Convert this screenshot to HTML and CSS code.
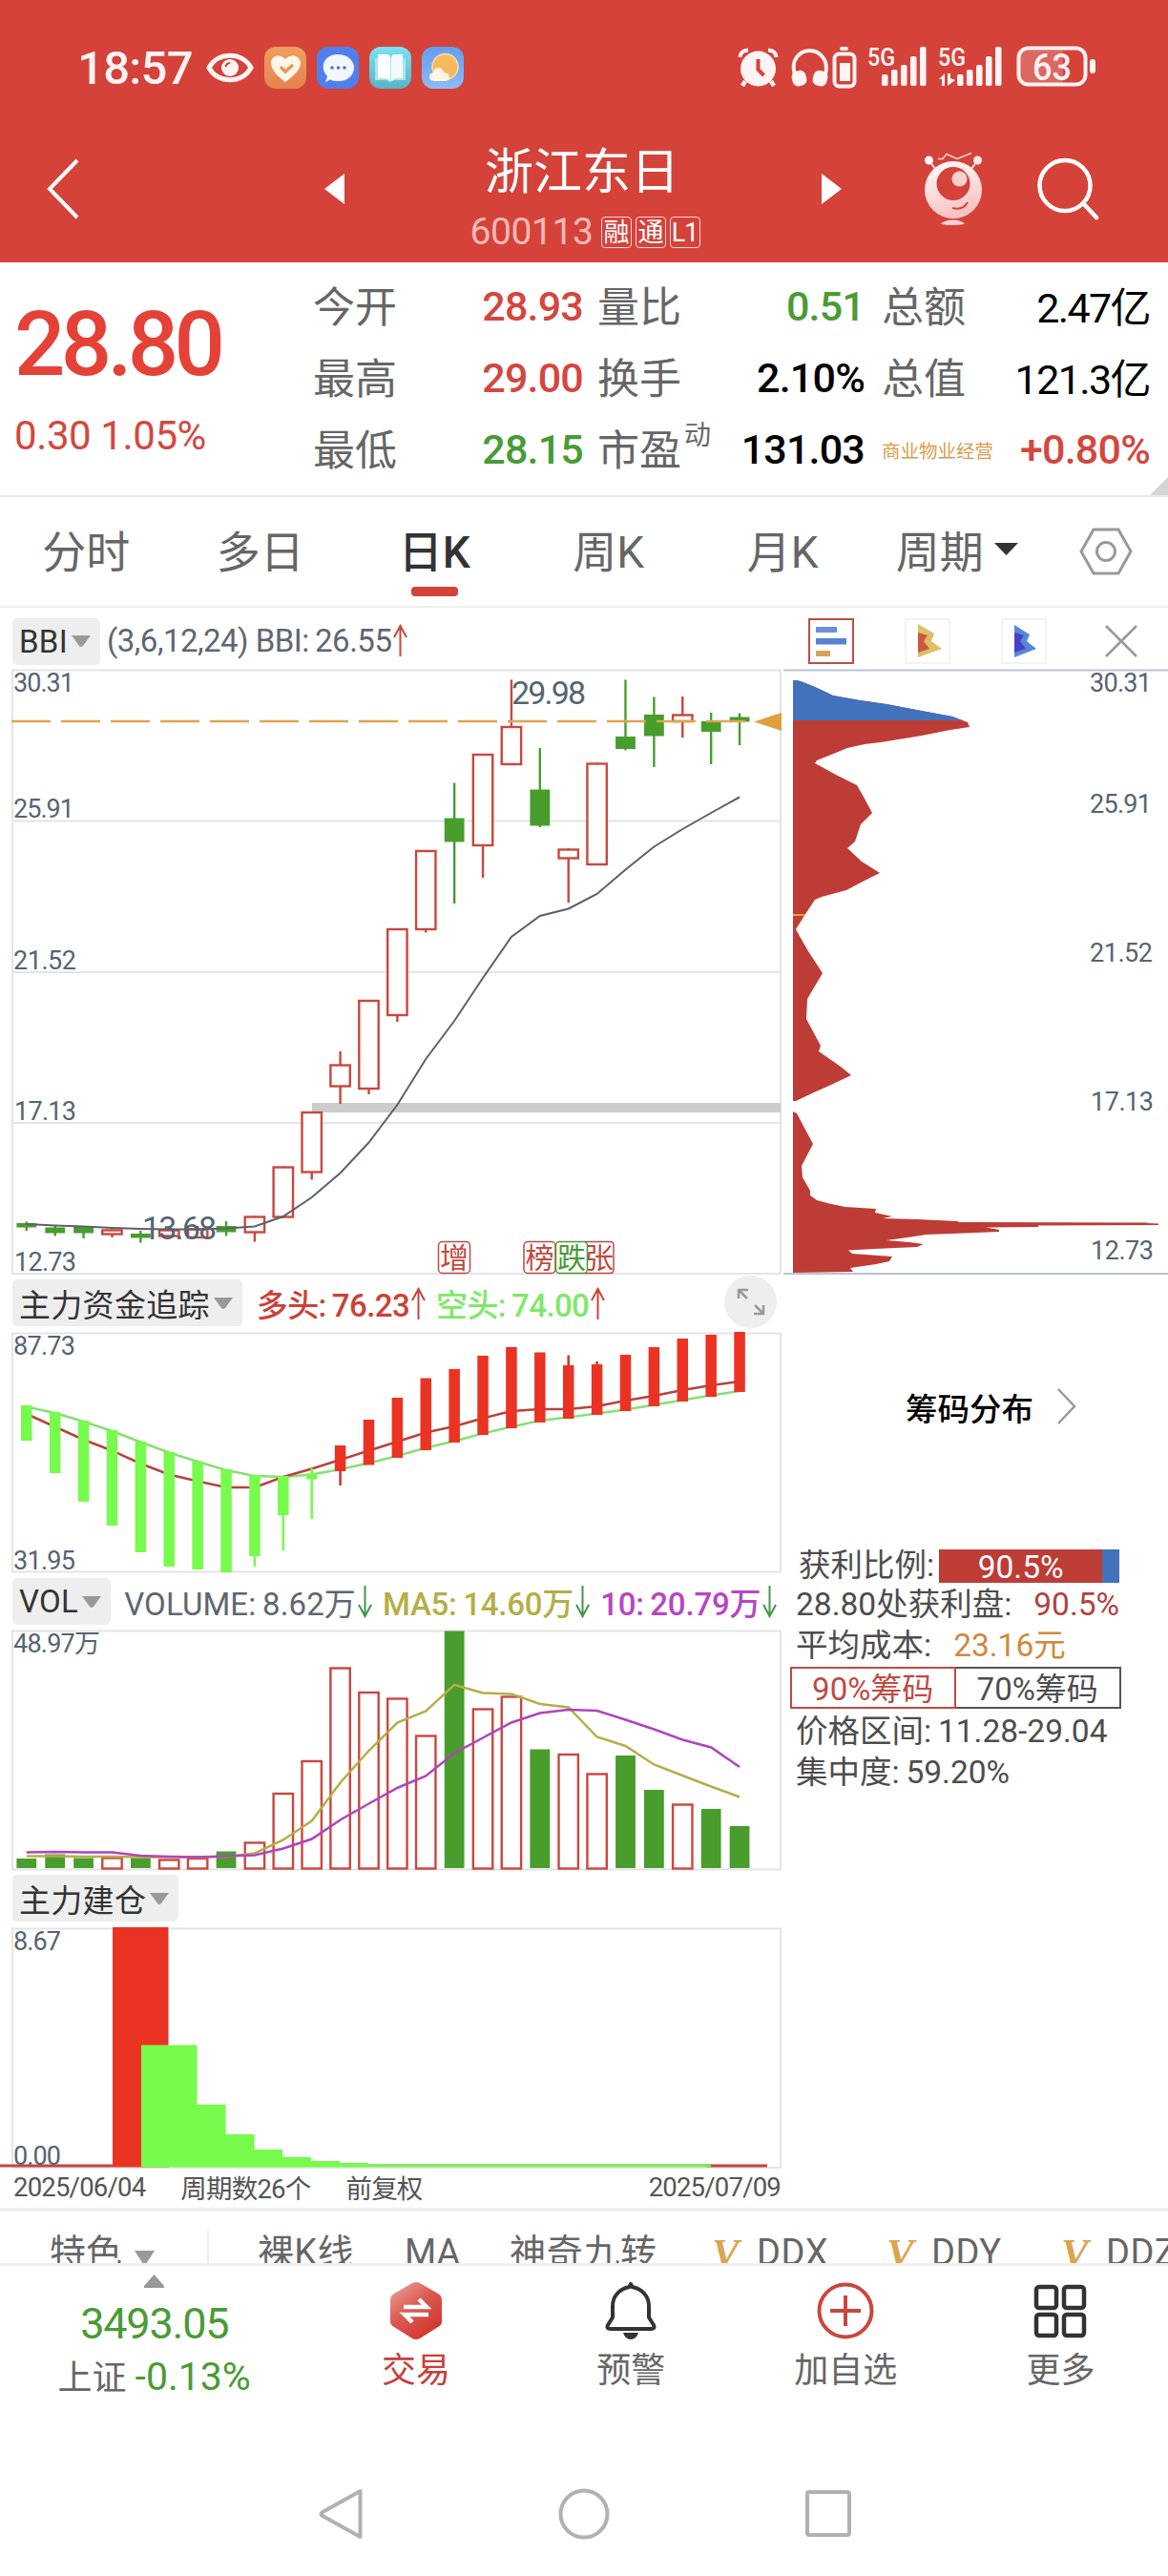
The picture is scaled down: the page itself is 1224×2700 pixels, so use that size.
FILE: index.html
```html
<html lang="zh-CN">
<head>
    <meta charset="utf-8">
    <title>浙江东日 600113</title>
    <link rel="stylesheet" href="styles.css">
    <script src="charts.js" defer></script>
</head>

<body>
<header>
    <div class="status">
        <span class="clock">18:57</span>
        <svg class="eye" width="50" height="34" viewBox="0 0 50 34">
            <path d="M3 17C12 0 38 0 47 17C38 34 12 34 3 17Z" fill="none" stroke="#fff3f3" stroke-width="5"/>
            <circle cx="25" cy="17" r="9" fill="#fff3f3"/>
            <path d="M20.500 16Q21 12.500 25 12" fill="none" stroke="#d4423a" stroke-width="2"/>
        </svg>
        <svg class="app" width="44" height="44" viewBox="0 0 44 44">
            <defs><linearGradient id="g1" x2="0" y2="1"><stop stop-color="#ef9f5e"/><stop offset="1" stop-color="#e58350"/></linearGradient></defs>
            <rect width="44" height="44" rx="12" fill="url(#g1)"/>
            <path d="M22 37C14 31 7 24 7 17C7 9 17 7 22 13C27 7 38 9 38 17C38 24 30 31 22 37Z" fill="#fff6e8"/>
            <path d="M17 21L22 26L30 19" fill="none" stroke="#e8975a" stroke-width="3.500"/>
        </svg>
        <svg class="app" width="44" height="44" viewBox="0 0 44 44">
            <rect width="44" height="44" rx="12" fill="#4f80ee"/>
            <path d="M9 37L11 31C2 21 8 8 22 8C33 8 39 15 39 22C39 30 32 36 23 36C19 36 16 35.500 14 34.500Z" fill="#f2f6ff"/>
            <circle cx="16" cy="22" r="1.800" fill="#4a72c8"/><circle cx="22.500" cy="22" r="1.800" fill="#4a72c8"/><circle cx="29" cy="22" r="1.800" fill="#4a72c8"/>
        </svg>
        <svg class="app" width="44" height="44" viewBox="0 0 44 44">
            <defs><linearGradient id="g2" x2="0" y2="1"><stop stop-color="#7be2f3"/><stop offset="1" stop-color="#58b4c8"/></linearGradient></defs>
            <rect width="44" height="44" rx="12" fill="url(#g2)"/>
            <path d="M6 12H38V35H26L22 37L18 35H6Z" fill="#a9e7ee"/>
            <path d="M9 8H18Q22 8 22 12V36Q20 33 17 33H9Z" fill="#fff"/>
            <path d="M35 8H27Q23 8 23 12V36Q25 33 28 33H35Z" fill="#f3fbfc"/>
        </svg>
        <svg class="app" width="44" height="44" viewBox="0 0 44 44">
            <defs><linearGradient id="g3" x2="0" y2="1"><stop stop-color="#639eef"/><stop offset="1" stop-color="#8dbbf6"/></linearGradient></defs>
            <rect width="44" height="44" rx="12" fill="url(#g3)"/>
            <circle cx="24.500" cy="21" r="13.500" fill="#f6b95e" stroke="#f9dda4" stroke-width="1.500"/>
            <path d="M13 36C6 36 7 27 12 27C13 20 22 21 23 27C30 27 31 36 25 36Z" fill="#fff4e6"/>
        </svg>
        <svg class="sys" width="380" height="48" viewBox="770 48 380 48">
            <g fill="none" stroke="#fff3f3">
                <path d="M774.500 61Q775 54 783 53.500M812.500 61Q812 54 804 53.500" stroke-width="4"/>
                <path d="M780 86L777 91M807 86L810 91" stroke-width="4.500"/>
                <path d="M832 79C827 64 837 54 847.500 54S868 64 864 79" stroke-width="4"/>
                <rect x="873.500" y="57.500" width="21" height="34" rx="5" stroke-width="4"/>
                <rect x="1066.500" y="51.500" width="70" height="38" rx="10" stroke-width="4"/>
            </g>
            <g fill="#fff3f3">
                <circle cx="793.500" cy="73" r="18.500"/>
                <rect x="829" y="75" width="15" height="16" rx="6" transform="rotate(-14 837 83)"/>
                <rect x="851" y="75" width="15" height="16" rx="6" transform="rotate(14 858 83)"/>
                <rect x="879" y="50" width="9" height="4" rx="2"/>
                <rect x="879" y="67" width="11" height="19"/>
                <rect x="923" y="79" width="6.500" height="12" rx="2"/>
                <rect x="933" y="74" width="6.500" height="17" rx="2"/>
                <rect x="943" y="69" width="6.500" height="22" rx="2"/>
                <rect x="953" y="60" width="6.500" height="31" rx="2"/>
                <rect x="963" y="50" width="6.500" height="41" rx="2"/>
                <rect x="1002" y="79" width="6.500" height="12" rx="2"/>
                <rect x="1012" y="74" width="6.500" height="17" rx="2"/>
                <rect x="1022" y="69" width="6.500" height="22" rx="2"/>
                <rect x="1032" y="60" width="6.500" height="31" rx="2"/>
                <rect x="1042" y="50" width="6.500" height="41" rx="2"/>
                <path d="M983 84L989 78V91H986V84ZM992 78H995V83L1000 85L992 91Z"/>
                <path d="M1068 54H1113V88H1074Q1068 88 1068 80Z" opacity=".22"/>
                <rect x="1141" y="63" width="6" height="15" rx="3"/>
                <text x="908" y="70" font-size="26" font-weight="500" textLength="29" lengthAdjust="spacingAndGlyphs">5G</text>
                <text x="982" y="70" font-size="26" font-weight="500" textLength="29" lengthAdjust="spacingAndGlyphs">5G</text>
                <text x="1081" y="85" font-size="38" font-weight="500" textLength="41" lengthAdjust="spacingAndGlyphs">63</text>
            </g>
            <path d="M793.500 63V74L799.500 80" fill="none" stroke="#d4423a" stroke-width="4"/>
        </svg>
    </div>

    <div class="titlebar">
        <svg width="34" height="66" viewBox="0 0 34 66"><path d="M32 3L3 33L32 63" fill="none" stroke="#fff" stroke-width="4"/></svg>
        <svg class="prev" width="21" height="32"><path d="M21 0V32L0 16Z" fill="#fff"/></svg>
        <div class="stock">
            <div class="name">浙江东日</div>
            <div class="code">600113 <span class="t1">融</span><span>通</span><span>L1</span></div>
        </div>
        <svg width="21" height="32"><path d="M0 0V32L21 16Z" fill="#fff"/></svg>
        <svg class="mascot" width="64" height="78" viewBox="967 159 64 78">
            <defs><linearGradient id="g4" x2=".3" y2="1"><stop stop-color="#fff"/><stop offset="1" stop-color="#f7c3c1"/></linearGradient></defs>
            <path d="M983 166.500H988L992 161.500L1003 166.500L1018 160.500" fill="none" stroke="#fbd5d3" stroke-width="1.500"/>
            <path d="M974 169L981 178M1024 169L1017 178" stroke="#fde6e5" stroke-width="2"/>
            <circle cx="973.500" cy="168" r="4.500" fill="#fff"/><circle cx="1024.500" cy="168" r="4.500" fill="#fde9e8"/>
            <circle cx="999" cy="199" r="30" fill="url(#g4)"/>
            <circle cx="999" cy="192.500" r="17.500" fill="#d4423a"/>
            <circle cx="1005.500" cy="187.500" r="8" fill="#f8d0ce"/>
            <path d="M998 218Q1009 221 1014 212" fill="none" stroke="#d4423a" stroke-width="2"/>
            <path d="M986 235Q989 230.500 998.500 230.500T1011 235Q998 237 986 235Z" fill="#f9cfcd"/>
        </svg>
        <svg class="search" width="66" height="66" viewBox="0 0 66 66"><g fill="none" stroke="#fff" stroke-width="4.500" stroke-linecap="round"><circle cx="29" cy="29.500" r="26.500"/><path d="M48 48L62 63"/></g></svg>
    </div>
</header>

<section class="quote">
    <div class="last">
        <b>28.80</b>
        <span>0.30 1.05%</span>
    </div>
    <div class="facts">
        <i>今开</i><span class="up">28.93</span><i class="mid">量比</i><span class="down">0.51</span><i class="far">总额</i><span class="cn">2.47亿</span>
        <i>最高</i><span class="up">29.00</span><i class="mid">换手</i><span>2.10%</span><i class="far">总值</i><span class="cn">121.3亿</span>
        <i>最低</i><span class="down">28.15</span><i class="mid">市盈<sup>动</sup></i><span>131.03</span><i class="far sector">商业物业经营</i><span class="up">+0.80%</span>
    </div>
    <svg class="corner" width="19" height="19"><path d="M19 0V19H0Z" fill="#d5d5d5"/></svg>
</section>

<nav class="tabs">
    <a>分时</a><a>多日</a><a class="on">日K</a><a>周K</a><a>月K</a>
    <a>周期<svg width="25" height="13"><path d="M0 0H25L12.500 13Z" fill="#333"/></svg></a>
    <svg class="gear" width="56" height="50" viewBox="0 0 56 50"><g fill="none" stroke="#999" stroke-width="3"><path d="M15 2H41L54 25L41 48H15L2 25Z"/><circle cx="28" cy="25" r="9.500"/></g></svg>
</nav>

<main>
    <div class="left">
        <div class="bar bar-main">
            <span class="pill">BBI<svg width="20" height="12"><path d="M0 0H20L12 11Q10 13 8 11Z" fill="#999"/></svg></span>
            <span class="leg slate bbi">(3,6,12,24) BBI:&thinsp;26.55</span>
            <svg class="arr" width="15" height="34"><path d="M7.500 1V34M1 14L7.500 2L14 14" fill="none" stroke="#c9453d" stroke-width="2"/></svg>
        </div>
        <svg class="chart" width="820" height="633" viewBox="0 702 820 633">
            <path class="grid" d="M13 702.500H818V1335H13ZM13 860.500H818M13 1019H818M13 1177H818"/>
            <g class="axis">
                <text x="14" y="725" textLength="64">30.31</text>
                <text x="14" y="857" textLength="64">25.91</text>
                <text x="14" y="1016" textLength="66">21.52</text>
                <text x="15" y="1174" textLength="65">17.13</text>
                <text x="15" y="1332" textLength="65">12.73</text>
            </g>
            <rect x="327" y="1156" width="491" height="10" fill="#ccc"/>
            <g id="candles"></g>
            <path id="bbi" class="line" stroke="#5b6069"/>
            <path d="M12 756H782" stroke="#dda551" stroke-width="2.500" stroke-dasharray="41 11"/>
            <path d="M790 756.500L819 747V766Z" fill="#dfa03c"/>
            <text class="mark" x="536" y="738" textLength="78">29.98</text>
            <text class="mark" x="149" y="1299" textLength="78">13.68</text>
            <g class="tagbox">
                <rect x="459.500" y="1301.500" width="33" height="33" rx="4"/><text x="461" y="1329">增</text>
                <rect x="549" y="1301.500" width="33" height="33" rx="4"/><text x="550.500" y="1329">榜</text>
                <path d="M612 1301.500H639Q643 1301.500 643 1305V1331Q643 1334.500 639 1334.500H612"/><text x="613" y="1329">张</text>
                <g class="g"><rect x="582.500" y="1301.500" width="33" height="33" rx="4"/><text x="584" y="1329">跌</text></g>
            </g>
        </svg>

        <div class="bar">
            <span class="pill">主力资金追踪<svg width="20" height="12"><path d="M0 0H20L12 11Q10 13 8 11Z" fill="#999"/></svg></span>
            <span class="leg red">多头:&thinsp;76.23</span>
            <svg class="arr" width="15" height="34"><path d="M7.500 1V34M1 14L7.500 2L14 14" fill="none" stroke="#c9453d" stroke-width="2"/></svg>
            <span class="leg lime">空头:&thinsp;74.00</span>
            <svg class="arr" width="15" height="34"><path d="M7.500 1V34M1 14L7.500 2L14 14" fill="none" stroke="#c9453d" stroke-width="2"/></svg>
            <svg class="expand" width="55" height="55"><circle cx="27.500" cy="27.500" r="27.500" fill="#eee"/><path d="M15 24V15H25M15 15L24 24M41 31V40H31M41 40L32 31" fill="none" stroke="#999" stroke-width="2.500"/></svg>
        </div>
        <svg class="chart" width="820" height="250" viewBox="0 1397 820 250">
            <path class="grid" d="M13 1397.500H818V1647.500H13Z"/>
            <g class="axis">
                <text x="14" y="1420" textLength="65">87.73</text>
                <text x="14" y="1644.500" textLength="65">31.95</text>
            </g>
            <path id="short" class="line w" stroke="#86e073"/>
            <path id="long" class="line w" stroke="#b8433a"/>
            <g id="fund"></g>
        </svg>

        <div class="bar bar-vol">
            <span class="pill">VOL<svg width="20" height="12"><path d="M0 0H20L12 11Q10 13 8 11Z" fill="#999"/></svg></span>
            <span class="leg slate vol">VOLUME:&thinsp;8.62万</span>
            <svg class="arr" width="15" height="34"><path d="M7.500 0V33M1 20L7.500 32L14 20" fill="none" stroke="#43954a" stroke-width="2"/></svg>
            <span class="leg olive">MA5:&thinsp;14.60万</span>
            <svg class="arr" width="15" height="34"><path d="M7.500 0V33M1 20L7.500 32L14 20" fill="none" stroke="#43954a" stroke-width="2"/></svg>
            <span class="leg purple">10:&thinsp;20.79万</span>
            <svg class="arr" width="15" height="34"><path d="M7.500 0V33M1 20L7.500 32L14 20" fill="none" stroke="#43954a" stroke-width="2"/></svg>
        </div>
        <svg class="chart" width="820" height="250" viewBox="0 1709 820 250">
            <path class="grid" d="M13 1709.500H818V1959.500H13Z"/>
            <g class="axis"><text x="14" y="1732" textLength="91">48.97万</text></g>
            <g id="volume"></g>
            <path id="ma5" class="line w" stroke="#b5ae48"/>
            <path id="ma10" class="line w" stroke="#b045bb"/>
        </svg>

        <div class="bar">
            <span class="pill">主力建仓<svg width="20" height="12"><path d="M0 0H20L12 11Q10 13 8 11Z" fill="#999"/></svg></span>
        </div>
        <svg class="chart" width="820" height="251" viewBox="0 2021 820 251">
            <path class="grid" d="M13 2021.500H818V2272H13Z"/>
            <path d="M0 2270H118M740 2270H804" stroke="#c8453a" stroke-width="3"/>
            <rect x="118" y="2020" width="58.500" height="251.500" fill="#ea3323"/>
            <path d="M148 2271.500V2143.500H206.500V2206H236.500V2237H266.500V2253H296V2261H326V2265H356V2267H386V2268.500H745V2271.500Z" fill="#77fb4c"/>
            <path d="M386 2269H745" stroke="#7fc95c" stroke-width="1"/>
            <g class="axis">
                <text x="14" y="2044" textLength="50">8.67</text>
                <text x="14" y="2268.500" textLength="50">0.00</text>
            </g>
        </svg>
        <div class="dates">
            <span>2025/06/04</span><span>周期数26个</span><span>前复权</span><span class="end">2025/07/09</span>
        </div>
    </div>

    <aside>
        <div class="modes">
            <svg class="on" width="48" height="48" viewBox="0 0 48 48"><rect x="8" y="9" width="22" height="6" fill="#6b91d8"/><rect x="8" y="21" width="32" height="6.500" fill="#5583d2"/><rect x="8" y="34" width="15" height="6" fill="#d6a458"/></svg>
            <svg width="48" height="48" viewBox="0 0 48 48"><path d="M14 6L31 16L28 24L39 32L14 41Z" fill="#e0bd6a"/><path d="M14 15L24 18L20 24L26 32L14 36Z" fill="#c9593c"/></svg>
            <svg width="48" height="48" viewBox="0 0 48 48"><path d="M14 7L30 17L27 24L37 32L14 41Z" fill="#5a86d6"/><path d="M14 15L24 18L20 24L26 32L14 36Z" fill="#4740c8"/></svg>
            <svg class="close" width="34" height="34"><path d="M1 1L33 33M33 1L1 33" stroke="#999" stroke-width="2.500"/></svg>
        </div>
        <svg class="chart" width="404" height="633" viewBox="820 702 404 633">
            <g id="chips"></g>
            <path d="M831 959H844" stroke="#eda13c" stroke-width="2"/>
            <path d="M821 702.500H1224M821 1335H1224" stroke="#b9c3d3" stroke-width="2"/>
            <g class="axis">
                <text x="1142" y="725" textLength="65">30.31</text>
                <text x="1142" y="852" textLength="65">25.91</text>
                <text x="1142" y="1008" textLength="66">21.52</text>
                <text x="1143" y="1164" textLength="66">17.13</text>
                <text x="1143" y="1320" textLength="66">12.73</text>
            </g>
        </svg>
        <div class="more">筹码分布<svg width="20" height="38"><path d="M1 1L18 19L1 37" fill="none" stroke="#999" stroke-width="2.500"/></svg></div>
        <div class="info">
            <p class="ratio">获利比例:<span class="meter">90.5%</span></p>
            <p>28.80处获利盘:<em class="red2">90.5%</em></p>
            <p>平均成本:<em class="gold">23.16元</em></p>
            <div class="switch"><a class="on">90%筹码</a><a>70%筹码</a></div>
            <p>价格区间:&thinsp;11.28-29.04</p>
            <p>集中度:&thinsp;59.20%</p>
        </div>
    </aside>
</main>

<div class="strip">
    <span class="first">特色</span><svg width="23" height="16"><path d="M1 0H22L13 14Q11.500 16 10 14Z" fill="#999"/></svg>
    <span class="naked">裸K线</span><span class="ma">MA</span><span class="nine">神奇九转</span>
    <span class="vip">V</span><span class="dd">DDX</span><span class="vip">V</span><span class="dd">DDY</span><span class="vip">V</span><span class="dd">DDZ</span>
</div>

<footer>
    <div class="index">
        <svg width="21" height="14"><path d="M10.500 0L21 12V14H0V12Z" fill="#999"/></svg>
        <div class="pts">3493.05</div>
        <div class="chg">上证 <span>-0.13%</span></div>
    </div>
    <a class="trade">
        <svg width="56" height="62" viewBox="0 0 56 62">
            <defs><linearGradient id="g5" x2=".7" y2="1"><stop stop-color="#eda7a2"/><stop offset=".5" stop-color="#db5a53"/><stop offset="1" stop-color="#d2352c"/></linearGradient></defs>
            <path d="M24 2Q28 0 32 2L51 13Q55 15 55 20V42Q55 46 51 48L32 60Q28 62 24 60L5 48Q1 46 1 42V20Q1 15 5 13Z" fill="url(#g5)"/>
            <path d="M15 27H39L31 19M41 35H16L24 43" fill="none" stroke="#fff" stroke-width="4.500"/>
        </svg>交易</a>
    <a>
        <svg width="56" height="62" viewBox="0 0 56 62"><g fill="none" stroke="#333" stroke-width="4"><path d="M28 3L29.500 6C40 8 47 16 47 26V38L52 46Q54 50 49 50H7Q2 50 4 46L9 38V26C9 16 16 8 26.500 6Z" stroke-linejoin="round"/></g><path d="M20 54H36Q34 61 28 61T20 54Z" fill="#333"/></svg>预警</a>
    <a>
        <svg width="60" height="62" viewBox="0 0 60 62"><g fill="none" stroke="#cb463f" stroke-width="4"><circle cx="30" cy="31" r="27.500"/><path d="M30 15V47M14 31H46"/></g></svg>加自选</a>
    <a>
        <svg width="56" height="62" viewBox="0 0 56 62"><g fill="none" stroke="#333" stroke-width="4.500"><rect x="3" y="6" width="21" height="22" rx="3"/><rect x="32" y="6" width="21" height="22" rx="3"/><rect x="3" y="35" width="21" height="22" rx="3"/><rect x="32" y="35" width="21" height="22" rx="3"/></g></svg>更多</a>
</footer>

<div class="keys">
    <svg width="46" height="54"><path d="M43.500 3V51L4 29Q1 27 4 25Z" fill="none" stroke="#b1b1b1" stroke-width="4" stroke-linejoin="round"/></svg>
    <svg width="54" height="54"><circle cx="27" cy="27" r="24.500" fill="none" stroke="#b1b1b1" stroke-width="4"/></svg>
    <svg width="48" height="50"><rect x="2" y="2" width="44" height="45" rx="2" fill="none" stroke="#b1b1b1" stroke-width="4"/></svg>
</div>
</body>
</html>
```
FILE: styles.css
```css
body {
    margin: 0;
    width: 1224px;
    height: 2700px;
    overflow: hidden;

    background: #fff;
    color: #000;
    font-family: Roboto, "Noto Sans CJK SC", sans-serif;
}

svg {
    display: block;
    flex: none;
}

header {
    height: 275px;
    background: #d4423a;
    color: #fff;
}

.status {
    height: 100px;
    padding: 21px 0 0 81px;
    display: flex;
    align-items: center;
}

.clock {
    width: 135px;
    font-size: 49px;
    font-weight: 500;
    letter-spacing: -0.7px;
    color: #fff3f3;
}

.eye {
    margin-right: 11px;
}

.app {
    margin-right: 11px;
}

.sys {
    margin-left: 274px;
    overflow: visible;
}

.titlebar {
    height: 154px;
    padding-left: 49px;
    display: flex;
    align-items: center;
}

.prev {
    margin-left: 257px;
}

.stock {
    width: 500px;
    height: 154px;
    text-align: center;
}

.name {
    padding-top: 27px;
    margin-left: -2px;
    font-size: 51px;
    line-height: 66px;
}

.code {
    display: flex;
    justify-content: center;
    align-items: center;
    gap: 4px;
    height: 58px;
    margin-left: 4px;
    font-size: 39px;
    letter-spacing: -.4px;
    color: #f6b9b5;
}

.code span {
    width: 30px;
    height: 31px;
    border: 1.5px solid #f9d5d3;
    border-radius: 4px;
    font-size: 27px;
    line-height: 32px;
    color: #fff;
    letter-spacing: -1px;
}

.code .t1 {
    margin-left: 4px;
}

.mascot {
    margin-left: 85px;
}

.search {
    margin-left: 56px;
}

/* quote */
.quote {
    position: relative;
    display: flex;
    height: 244px;
    border-bottom: 2px solid #ebebeb;
}

.last {
    width: 328px;
    padding-left: 15px;
    box-sizing: border-box;
}

.last b {
    display: block;
    margin-top: 31px;
    font-size: 94px;
    font-weight: 500;
    line-height: 110px;
    letter-spacing: -4.7px;
    color: #e54237;
}

.last span {
    display: block;
    margin-top: 16px;
    font-size: 42px;
    line-height: 50px;
    letter-spacing: -.4px;
    color: #d3473f;
}

.facts {
    display: grid;
    grid-template-columns: 132px 151px 118px 177px 142px 157px;
    grid-template-rows: repeat(3, 75px);
    padding-top: 9px;
    font-size: 44px;
    line-height: 75px;
    white-space: nowrap;
}

.facts span {
    justify-self: end;
    font-size: 43px;
    font-weight: 500;
    letter-spacing: -.8px;
}

.facts i {
    padding-top: 2px;
    height: 73px;
    font-style: normal;
    color: #666;
}

.facts .mid {
    padding-left: 15px;
}

.facts .far {
    padding-left: 18px;
}

.facts .cn {
    padding-top: 2px;
    font-weight: 400;
    letter-spacing: -1.6px;
}

.facts sup {
    display: inline-block;
    margin-left: 3px;
    font-size: 28px;
    line-height: 28px;
    vertical-align: 22px;
}

.facts .sector {
    font-size: 19.5px;
    color: #dc9b4b;
}

.facts .up {
    color: #d3473f;
}

.facts .down {
    color: #499b35;
}

.corner {
    position: absolute;
    right: 0;
    bottom: 0;
}

.tabs {
    display: flex;
    align-items: center;
    height: 114px;
    border-bottom: 2px solid #f0f0f0;
}

.tabs a {
    position: relative;
    box-sizing: border-box;
    display: flex;
    justify-content: center;
    align-items: center;
    gap: 11px;
    width: 182.5px;
    height: 114px;
    padding: 0 2px 6px 0;
    font-size: 46px;
    color: #666;
}

.tabs .on {
    color: #333;
    font-weight: 500;
}

.tabs .on::after {
    content: "";
    position: absolute;
    left: 66px;
    bottom: 10px;
    width: 49px;
    height: 10px;
    border-radius: 4px;
    background: #d4423a;
}

.gear {
    margin: 0 0 0 36px;
}

/* charts */
main {
    display: flex;
    height: 1677px;
    border-bottom: 4px solid #f0f0f0;
}

.left {
    width: 820px;
}

.bar {
    display: flex;
    align-items: center;
    height: 62px;
    padding-left: 13px;
    white-space: nowrap;
}

.bar-main {
    height: 62px;
    padding-top: 3px;
}

.bar-main .pill {
    margin-top: 2px;
}

.bar-vol {
    height: 60px;
    padding-top: 2px;
}

.pill {
    display: flex;
    align-items: center;
    gap: 4px;
    height: 49px;
    padding: 0 10px 0 7px;
    margin-top: -1px;
    border-radius: 5px;
    background: #eee;
    font-size: 33px;
    letter-spacing: 0.3px;
    color: #333;
}

.leg {
    margin-left: 15px;
    font-size: 33px;
}

.leg.bbi {
    margin-left: 7px;
    letter-spacing: -.5px;
}

.leg.vol {
    margin-left: 14px;
    letter-spacing: .1px;
}

.arr {
    margin-left: 2px;
}

.arr + .leg {
    margin-left: 11px;
}

.slate { color: #5f6671; }
.red { color: #ca4137; }
.lime { color: #7fe868; }
.olive { color: #b5ae48; }
.purple { color: #b845c4; }

.red, .lime, .olive, .purple {
    font-weight: 500;
    letter-spacing: -.6px;
}

.olive, .purple {
    letter-spacing: -.2px;
}

.expand {
    margin: -3px 6px 0 auto;
}

.chart {
    overflow: visible;
}

.grid {
    fill: none;
    stroke: #e4e4e4;
    stroke-width: 2;
}

.axis text {
    font-size: 27px;
    fill: #566472;
}

.mark {
    font-size: 34px;
    fill: #566472;
}

.line {
    fill: none;
    stroke-width: 2;
}

.line.w {
    stroke-width: 2.5;
}

.tagbox text {
    font-size: 30px;
    fill: #c04a42;
}

.tagbox rect, .tagbox path {
    fill: #fff;
    stroke: #c04a42;
    stroke-width: 1.5;
}

.tagbox .g text { fill: #469a32; }
.tagbox .g rect { stroke: #469a32; }

.dates {
    display: flex;
    align-items: center;
    height: 40px;
    padding: 0 2px 0 14px;
    font-size: 27.5px;
    letter-spacing: -.8px;
    color: #555;
}

.dates span {
    margin-right: 37px;
}

.dates .end {
    margin: 0 0 0 auto;
}

/* chip distribution */
aside {
    width: 404px;
}

.modes {
    display: flex;
    align-items: center;
    height: 65px;
    padding-left: 27px;
    gap: 53px;
}

.modes svg {
    box-sizing: border-box;
    margin-top: 4px;
    outline: 2px solid #f3f3f3;
    outline-offset: -2px;
}

.modes .on {
    outline-color: #b94e48;
}

.modes .close {
    margin-left: 8px;
    outline: none;
}

.more {
    display: flex;
    align-items: center;
    gap: 25px;
    margin: 115px 0 0 129px;
    height: 48px;
    font-size: 33.5px;
    font-weight: 500;
}

.info {
    padding: 123px 0 0 8px;
    font-size: 33.5px;
    color: #4d4d4d;
    white-space: nowrap;
}

.info p {
    margin: 0;
    padding-left: 6px;
    height: 42.5px;
    line-height: 42px;
}

.info .ratio {
    display: flex;
    gap: 4px;
    padding-left: 9px;
    height: 40px;
    line-height: 40px;
}

.meter {
    width: 171px;
    height: 35px;
    margin-top: 3px;
    margin-left: 1px;
    padding-right: 18px;
    line-height: 37px;
    background: linear-gradient(90deg, #be3c36 171px, #4272bb 171px);
    color: #fff;
    text-align: center;
}

.info em {
    margin-left: 23px;
    font-style: normal;
}

.red2 { color: #b0433d; }
.gold { color: #cf8a3c; }

.switch {
    display: flex;
    width: 347px;
    margin: 1px 0 3px;
}

.switch a {
    box-sizing: border-box;
    width: 174px;
    height: 44px;
    border: 2px solid #555;
    font-size: 33px;
    line-height: 43px;
    text-align: center;
}

.switch a + a {
    border-left: none;
}

.switch .on {
    border-color: #c04a42;
    color: #c04a42;
}

/* indicator strip, cut by the footer */
.strip {
    display: flex;
    height: 54px;
    overflow: hidden;
    border-bottom: 3px solid #f0f0f0;
    font-size: 38px;
    line-height: 87px;
    color: #666;
    white-space: nowrap;
}

.strip > * {
    flex: none;
}

.first { margin-left: 52px; }

.strip svg {
    margin: 41px 0 0 12px;
}

.naked {
    margin-left: 54px;
    padding-left: 53px;
    width: 101px;
    background: linear-gradient(#eee, #eee) 0 19px / 2px 60px no-repeat;
    letter-spacing: .3px;
}

.ma {
    width: 57px;
    margin-left: 53px;
    margin-right: 53px;
}

.nine {
    width: 155px;
    letter-spacing: .7px;
}

.vip {
    width: 33px;
    margin-left: 57px;
    font-family: "Liberation Serif", serif;
    font-size: 43px;
    font-weight: bold;
    font-style: italic;
    color: #dba54f;
}

.dd {
    width: 79px;
    margin-left: 14px;
    letter-spacing: .6px;
}

footer {
    display: flex;
    height: 170px;
    font-size: 36px;
}

footer a {
    width: 225.5px;
    text-align: center;
    line-height: 36px;
    color: #666;
}

footer a svg {
    margin: 16px auto 14px;
}

footer .trade {
    color: #c9403a;
}

.index {
    width: 324px;
    padding-top: 9px;
    text-align: center;
    color: #499b35;
}

.index svg {
    margin: 0 auto;
}

.pts {
    margin-top: 13px;
    font-size: 45px;
    line-height: 50px;
    letter-spacing: -1.2px;
}

.chg {
    margin-top: 8px;
    line-height: 44px;
    color: #666;
}

.chg span {
    font-size: 41px;
    color: #499b35;
}

.keys {
    display: flex;
    align-items: center;
    gap: 205px;
    height: 180px;
    padding-left: 334px;
}
```
FILE: charts.js
```js
const STEP = 29.89;
const X0 = 27.8;
const GREEN = '#489d2d';
const RED = '#c9473e';

const x = i => X0 + i * STEP;
const el = id => document.getElementById(id);

// colour, body top, body bottom, high, low
const candles = [
    ['g', 1282, 1286.5, 1280.5, 1290], ['g', 1286.5, 1292.5, 1284.5, 1295.5], ['g', 1286, 1292.5, 1285, 1298],
    ['r', 1288.5, 1294.5, 1288.5, 1297], ['g', 1293, 1297.5, 1290, 1302.5], ['r', 1288.5, 1296.5, 1288.5, 1297],
    ['r', 1287.5, 1298, 1285, 1298], ['g', 1285, 1291.5, 1280, 1295.5], ['r', 1274.5, 1292.5, 1274.5, 1301.5],
    ['r', 1222.5, 1276.5, 1222.5, 1276.5], ['r', 1165, 1229.5, 1165, 1236.5], ['r', 1115.5, 1139.5, 1102, 1157],
    ['r', 1048, 1142, 1048, 1147], ['r', 973, 1065, 973, 1071], ['r', 891, 975, 891, 977.5],
    ['g', 857.5, 882.5, 820.5, 947], ['r', 790, 887, 790, 920], ['r', 761, 802, 712.5, 802],
    ['g', 827.5, 865.5, 784, 867], ['r', 889.5, 900.5, 889.5, 946], ['r', 799.5, 907, 799.5, 907],
    ['g', 772, 785, 712.5, 786.5], ['g', 749, 771.5, 730.5, 804], ['r', 748.5, 757, 730, 773],
    ['g', 756, 767, 747, 801], ['g', 751.5, 756.5, 747.5, 781]
];

// top, bottom, wick top, wick bottom
const fund = [
    [1473, 1510], [1480, 1544], [1489, 1574], [1499, 1599], [1511, 1627], [1522, 1642], [1531.5, 1645],
    [1540, 1648], [1546, 1631, 1546, 1642], [1547, 1588, 1547, 1625], [1544.5, 1550.5, 1539, 1592],
    [1515, 1542, 1515, 1557], [1488, 1535.5], [1465, 1528], [1444.5, 1520], [1435, 1512], [1421, 1504],
    [1412, 1497], [1417.5, 1491], [1431, 1487, 1420.5, 1487], [1430, 1483, 1427, 1483], [1420, 1479],
    [1412, 1474], [1403, 1469], [1399, 1464], [1396, 1459]
];

const volume = [
    ['g', 1948], ['g', 1943.5], ['g', 1947.5], ['r', 1946.5], ['g', 1947.5], ['r', 1948.5], ['r', 1947],
    ['g', 1940.5], ['r', 1930.5], ['r', 1879], ['r', 1845], ['r', 1747.5], ['r', 1773], ['r', 1779.5],
    ['r', 1818.5], ['g', 1709.5], ['r', 1790.5], ['r', 1777.5], ['g', 1833.5], ['r', 1838], ['r', 1858.5],
    ['g', 1840], ['g', 1876], ['r', 1890.5], ['g', 1896], ['g', 1914]
];

const lines = {
    bbi: [1283, 1284.5, 1285.5, 1287, 1288, 1288.5, 1288.5, 1287.5, 1285.5, 1275, 1255, 1229.5, 1197.5, 1158,
        1110, 1070, 1025, 982, 960, 952.5, 937, 911.5, 887.5, 869, 852, 835.5],
    short: [1474.5, 1481, 1490, 1500, 1511.5, 1522.5, 1532, 1541, 1547, 1548, 1545.5, 1540, 1533.5, 1526, 1517.5,
        1510.5, 1502.5, 1495.5, 1489, 1485.5, 1481.5, 1477.5, 1472.5, 1467.5, 1462.5, 1458],
    long: [1482, 1495.5, 1509, 1520.5, 1534, 1545.5, 1552.5, 1559, 1559, 1548, 1539.5, 1530, 1520.5, 1511, 1501.5,
        1495, 1486.5, 1479, 1477, 1477, 1474, 1468, 1463, 1457, 1452, 1448],
    ma5: [1945.5, 1945.5, 1946, 1946, 1946.5, 1946.5, 1946.5, 1946, 1942.5, 1928.5, 1908.5, 1868.5, 1835, 1805.5,
        1793.5, 1766, 1774.5, 1775.5, 1786, 1789.5, 1820.5, 1830, 1849.5, 1861, 1872.5, 1883.5],
    ma10: [1941.5, 1941, 1941.5, 1941.5, 1945, 1946, 1946.5, 1945.5, 1944.5, 1937.5, 1927.5, 1907.5, 1890.5, 1874,
        1861.5, 1837.5, 1821.5, 1805.5, 1795.5, 1792, 1793, 1802.5, 1812.5, 1823.5, 1831.5, 1852]
};

function solid(cx, top, bottom, w, color) {
    return `<rect x="${cx - w / 2}" y="${top}" width="${w}" height="${bottom - top}" fill="${color}"/>`;
}

function hollow(cx, top, bottom) {
    return `<rect x="${cx - 10.2}" y="${top + 1}" width="20.4" height="${bottom - top - 2}" fill="#fff" stroke="${RED}" stroke-width="2.4"/>`;
}

el('candles').innerHTML = candles.map(([c, top, bottom, hi, lo], i) => {
    const color = c === 'g' ? GREEN : RED;
    return solid(x(i), hi, lo, 2.4, color) + (c === 'g' ? solid(x(i), top, bottom, 20.8, color) : hollow(x(i), top, bottom));
}).join('');

el('fund').innerHTML = fund.map(([top, bottom, hi, lo], i) => {
    const color = i < 11 ? '#77fb4c' : '#ea3323';
    return (hi ? solid(x(i), hi, lo, 2.6, i < 11 ? color : '#d03a30') : '') + solid(x(i), top, bottom, 11.5, color);
}).join('');

el('volume').innerHTML = volume.map(([c, top], i) =>
    c === 'g' ? solid(x(i), top, 1958, 20.8, GREEN) : hollow(x(i), top, 1959.5)
).join('');

for (const id in lines) {
    el(id).setAttribute('d', 'M' + lines[id].map((y, i) => x(i) + ' ' + y).join('L'));
}

// chip profile: [width, y]
const profile = [
    [3, 713], [8, 714], [23, 720], [42, 729], [70, 734], [98, 738], [140, 746], [167, 751], [183, 757],
    [185, 762], [165, 765], [135, 771], [92, 778], [75, 780], [57, 784], [40, 791], [25, 797], [23, 800],
    [45, 812], [67, 823], [75, 837], [83, 852], [71, 864], [65, 882], [57, 889], [72, 903], [91, 915],
    [73, 924], [56, 933], [30, 940], [23, 943], [15, 955], [3, 974], [4, 976], [16, 997], [31, 1020],
    [15, 1047], [14, 1068], [29, 1096], [27, 1102], [50, 1118], [61, 1127], [40, 1137], [22, 1145], [3, 1154],
    [0, 1154], [0, 1165], [4, 1167], [13, 1184], [21, 1199], [9, 1222], [10, 1234], [18, 1248], [18, 1253],
    [25, 1258], [40, 1262], [55, 1265], [87, 1267], [86, 1271], [104, 1275], [94, 1277], [130, 1278],
    [173, 1280], [173, 1281], [371, 1281.5], [371, 1282], [383, 1282.5], [383, 1284], [257, 1284.5],
    [257, 1286], [202, 1286.5], [216, 1289], [216, 1291], [192, 1292], [140, 1294], [120, 1297], [98, 1300],
    [122, 1302], [137, 1304], [130, 1307], [85, 1309], [58, 1310.5], [62, 1314], [104, 1317], [101, 1322],
    [87, 1325], [60, 1329], [63, 1333], [0, 1334]
];
const shape = 'M831 713L' + profile.map(([w, y]) => (831 + w) + ' ' + y).join('L') + 'Z';
el('chips').innerHTML =
    `<clipPath id="above"><rect x="820" y="702" width="404" height="53"/></clipPath>
    <path d="${shape}" fill="#be3c36"/>
    <path d="${shape}" fill="#4272bb" clip-path="url(#above)"/>`;
```
